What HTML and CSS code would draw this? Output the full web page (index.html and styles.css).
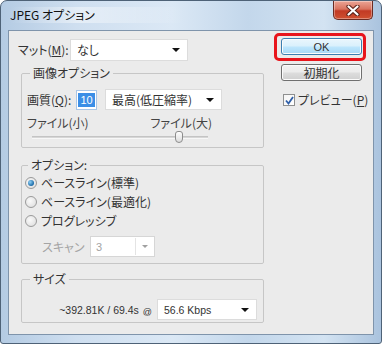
FILE: index.html
```html
<!DOCTYPE html>
<html lang="ja">
<head>
    <meta charset="UTF-8">
    <title>JPEG オプション</title>
    <link rel="stylesheet" href="styles.css">
</head>
<body>
    <div class="window">
        <div class="titlebar">
            <span class="title">JPEG オプション</span>
            <span class="close">
                <svg width="14" height="11" viewBox="0 0 14 11">
                    <path d="M2.5 1.5 L11.5 9.5 M11.5 1.5 L2.5 9.5" stroke="#5a2219" stroke-width="4.2" stroke-linecap="round"/>
                    <path d="M2.5 1.5 L11.5 9.5 M11.5 1.5 L2.5 9.5" stroke="#fff" stroke-width="2.2" stroke-linecap="round"/>
                </svg>
            </span>
        </div>
        <div class="client">
            <div class="left">
                <div class="matte-row">
                    <span class="matte-label">マット(<u>M</u>):</span>
                    <div class="select matte-select"><span>なし</span><i class="arrow"></i></div>
                </div>

                <fieldset class="group group-image">
                    <legend>画像オプション</legend>
                    <div class="quality-row">
                        <span class="quality-label">画質(<u>Q</u>):</span>
                        <div class="num-input"><span class="num-sel">10</span></div>
                        <div class="select quality-select"><span>最高(低圧縮率)</span><i class="arrow"></i></div>
                    </div>
                    <div class="file-row"><span>ファイル(小)</span><span>ファイル(大)</span></div>
                    <div class="slider">
                        <div class="track track-left"></div>
                        <div class="thumb"></div>
                        <div class="track track-right"></div>
                    </div>
                </fieldset>

                <fieldset class="group group-options">
                    <legend>オプション:</legend>
                    <div class="radio-row"><span class="radio checked"></span>ベースライン(標準)</div>
                    <div class="radio-row"><span class="radio"></span>ベースライン(最適化)</div>
                    <div class="radio-row"><span class="radio"></span>プログレッシブ</div>
                    <div class="scan-row">
                        <span class="scan-label">スキャン</span>
                        <div class="select scan-select"><span>3</span><i class="sep"></i><i class="arrow"></i></div>
                    </div>
                </fieldset>

                <fieldset class="group group-size">
                    <legend>サイズ</legend>
                    <div class="size-row">
                        <span class="size-text">~392.81K / 69.4s</span>
                        <span class="at">@</span>
                        <div class="select speed-select"><span>56.6 Kbps</span><i class="arrow"></i></div>
                    </div>
                </fieldset>
            </div>

            <div class="right">
                <div class="highlight">
                    <div class="button default">OK</div>
                </div>
                <div class="button reset">初期化</div>
                <div class="check-row">
                    <span class="checkbox">
                        <svg width="9" height="9" viewBox="0 0 9 9">
                            <path d="M1 4.5 L3.5 7.5 L8 1" fill="none" stroke="#2f5fa8" stroke-width="1.8"/>
                        </svg>
                    </span>
                    プレビュー(<u>P</u>)
                </div>
            </div>
        </div>
    </div>
</body>
</html>
```

FILE: styles.css
```css
* {
    box-sizing: border-box;
}
body {
    margin: 0;
    background: #fff;
    font-family: "Noto Sans CJK JP", sans-serif;
    font-size: 12px;
    font-feature-settings: "palt";
    color: #333;
    line-height: 16px;
}
u {
    text-decoration: underline;
    text-underline-offset: 1px;
}
.window {
    width: 382px;
    height: 344px;
    display: flex;
    flex-direction: column;
    padding: 0 7px 8px 7px;
    border: 1px solid #4e6277;
    border-radius: 7px 7px 3px 3px;
    background: linear-gradient(90deg, #b4cbe3 0%, #cfdff0 20%, #dbe8f5 45%, #c3d7eb 65%, #d3e3f2 85%, #aac3de 100%);
}
.titlebar {
    height: 29px;
    display: flex;
    justify-content: space-between;
    align-items: flex-start;
}
.title {
    margin: 6px 0 0 2px;
    color: #111;
    padding-right: 90px;
    background: linear-gradient(90deg, rgba(255,255,255,0) 0%, rgba(255,255,255,0.45) 40%, rgba(255,255,255,0) 100%);
}
.close {
    width: 40px;
    height: 19px;
    margin-right: 1px;
    display: flex;
    justify-content: center;
    align-items: center;
    border: 1px solid #6b2b22;
    border-top: none;
    border-radius: 0 0 5px 5px;
    background: linear-gradient(#eba596 0%, #d9735f 45%, #c23a24 55%, #cf5030 100%);
    box-shadow: inset 0 0 0 1px rgba(255,255,255,0.35);
}
.client {
    flex: 1;
    display: flex;
    border: 1px solid #7f94ab;
    background: #ebebeb;
}
.left {
    width: 255px;
    padding-left: 9px;
    display: flex;
    flex-direction: column;
}
.matte-row {
    margin-top: 8px;
    height: 22px;
    display: flex;
    align-items: center;
}
.matte-label {
    width: 52px;
}
.select {
    height: 22px;
    display: flex;
    align-items: center;
    justify-content: space-between;
    padding: 0 7px 0 6px;
    background: #fff;
    border: 1px solid #dcdcdc;
}
.arrow {
    width: 0;
    height: 0;
    border-top: 4px solid #111;
    border-left: 4px solid transparent;
    border-right: 4px solid transparent;
}
.matte-select {
    width: 118px;
}
.group {
    margin: 0 0 0 3px;
    width: 243px;
    border: 1px solid #c6c6c6;
    border-radius: 2px;
}
.group legend {
    margin-left: 3px;
    padding: 0 3px;
    line-height: 16px;
}
.group-image {
    margin-top: 4px;
    padding: 8px 5px 4px 5px;
}
.quality-row {
    height: 21px;
    display: flex;
    align-items: center;
}
.quality-label {
    width: 49px;
}
.num-input {
    width: 21px;
    height: 20px;
    margin-right: 8px;
    display: flex;
    align-items: center;
    justify-content: center;
    background: #fff;
    border: 1px solid #a9c6e6;
}
.num-sel {
    background: #3a8ee6;
    color: #fff;
    font-family: "Liberation Sans", sans-serif;
    font-size: 11px;
    line-height: 14px;
    padding: 0 2px;
}
.quality-select {
    width: 117px;
    height: 21px;
}
.file-row {
    margin-top: 5px;
    width: 185px;
    display: flex;
    justify-content: space-between;
    color: #444;
}
.slider {
    margin: 0 0 0 5px;
    height: 12px;
    display: flex;
    align-items: center;
}
.track {
    height: 3px;
    background: #d6d6d6;
    border-top: 1px solid #c4c4c4;
    border-bottom: 1px solid #f7f7f7;
}
.track-left {
    width: 143px;
}
.track-right {
    width: 25px;
}
.thumb {
    width: 8px;
    height: 12px;
    border: 1px solid #8c8c8c;
    border-radius: 3px 3px 4px 4px;
    background: linear-gradient(#fdfdfd, #dcdcdc);
}
.group-options {
    margin-top: 9px;
    padding: 0 5px 6px 3px;
}
.radio-row {
    height: 19px;
    display: flex;
    align-items: center;
}
.radio {
    width: 12px;
    height: 12px;
    margin-right: 4px;
    border-radius: 50%;
    border: 1px solid #9a9a9a;
    background: radial-gradient(circle at 40% 40%, #fafafa, #dadada);
    display: flex;
    align-items: center;
    justify-content: center;
}
.radio.checked::after {
    content: "";
    width: 6px;
    height: 6px;
    border-radius: 50%;
    background: radial-gradient(circle at 35% 35%, #8fd0f5, #1a6aa8 70%);
}
.scan-row {
    margin-top: 6px;
    height: 21px;
    display: flex;
    align-items: center;
    padding-left: 17px;
    color: #a4a4a4;
}
.scan-label {
    width: 48px;
}
.scan-select {
    width: 65px;
    height: 21px;
    padding: 0 6px 0 5px;
    border-color: #d6d6d6;
    font-family: "Liberation Sans", sans-serif;
    font-size: 11px;
}
.scan-select span {
    flex: 1;
}
.sep {
    width: 1px;
    height: 17px;
    background: #e4e4e4;
    margin-right: 6px;
}
.scan-select .arrow {
    border-top-color: #a0a0a0;
    border-left-width: 3px;
    border-right-width: 3px;
    border-top-width: 3px;
}
.group-size {
    margin-top: 7px;
    padding: 12px 6px 2px 5px;
}
.size-row {
    height: 21px;
    display: flex;
    align-items: center;
    justify-content: flex-end;
    font-family: "Liberation Sans", sans-serif;
    font-size: 10.5px;
}
.at {
    margin: 4px 5px 0 4px;
    font-size: 9px;
}
.speed-select {
    width: 100px;
    height: 21px;
}
.right {
    margin-left: 10px;
    padding-top: 2px;
    display: flex;
    flex-direction: column;
}
.highlight {
    width: 92px;
    height: 28px;
    padding: 2px 1px 3px 4px;
    border: 3px solid #e8141b;
    border-radius: 5px;
}
.button {
    width: 81px;
    height: 17px;
    display: flex;
    align-items: center;
    justify-content: center;
    border: 1px solid #707070;
    border-radius: 3px;
    background: linear-gradient(#f2f2f2 0%, #ebebeb 48%, #dddddd 52%, #cfcfcf 100%);
    box-shadow: inset 0 0 0 1px #fbfbfb;
    font-size: 12px;
}
.button.default {
    border-color: #3c7fb1;
    background: linear-gradient(#eaf6fd 0%, #d9f0fc 48%, #bee6fd 52%, #a7d9f5 100%);
    font-family: "Liberation Sans", sans-serif;
    font-size: 11px;
}
.reset {
    margin: 3px 0 0 7px;
}
.check-row {
    margin: 12px 0 0 9px;
    height: 14px;
    display: flex;
    align-items: center;
}
.checkbox {
    width: 12px;
    height: 12px;
    margin-right: 3px;
    border: 1px solid #8e8f8f;
    background: linear-gradient(135deg, #f4f4f4, #ffffff);
    display: flex;
    align-items: center;
    justify-content: center;
}
```
